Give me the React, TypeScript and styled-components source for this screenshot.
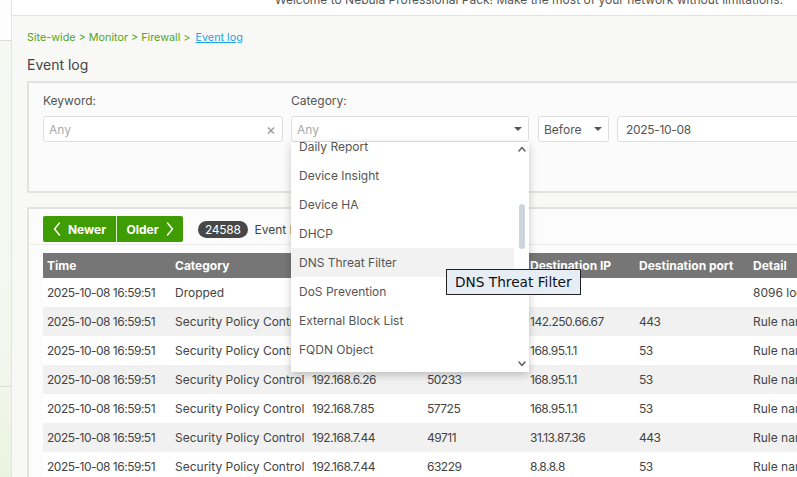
import React from "react";
import styled, { createGlobalStyle } from "styled-components";

const GlobalStyle = createGlobalStyle`
  html, body { margin: 0; padding: 0; }
  body {
    font-family: "Inter", "Noto Sans", sans-serif;
    background: #f8f9f7;
    overflow: hidden;
  }
  * { box-sizing: border-box; }
`;

const Page = styled.div`
  display: flex;
  width: 797px;
  height: 477px;
  overflow: hidden;
`;

const Sidebar = styled.aside`
  width: 12px;
  flex: none;
  display: flex;
  flex-direction: column;
  border-right: 1px solid #e3e5e1;
`;

const SideTop = styled.div`
  height: 41px;
  background: #fdfdfd;
  border-bottom: 1px solid #dcdcdc;
`;

const SideBody = styled.div`
  flex: 1;
  display: flex;
  flex-direction: column;
  background: linear-gradient(180deg, #f6f8f3 0%, #f3f7ee 70%, #eaf3e0 100%);
`;

const SideSpacer = styled.div`
  height: 345px;
`;

const SideLine = styled.div`
  height: 1px;
  background: #d9dcd5;
`;

const Main = styled.main`
  flex: 1;
  min-width: 0;
  display: flex;
  flex-direction: column;
  overflow: hidden;
`;

const TopBar = styled.header`
  height: 16px;
  flex: none;
  display: flex;
  justify-content: flex-end;
  align-items: flex-start;
  padding-right: 14px;
  background: #ffffff;
  border-bottom: 1px solid #e2e2e2;
  overflow: hidden;
`;

const Welcome = styled.span`
  margin-top: -8px;
  font-size: 12px;
  line-height: 16px;
  color: #555;
  white-space: nowrap;
`;

const Content = styled.div`
  padding: 15px 0 0 15px;
  display: flex;
  flex-direction: column;
`;

const Breadcrumb = styled.nav`
  font-size: 10.8px;
  line-height: 14px;
  color: #55a418;
  white-space: nowrap;
`;

const CrumbLink = styled.a`
  margin-left: 5px;
  color: #17a6e6;
  text-decoration: underline;
`;

const Title = styled.h1`
  margin: 11px 0 0;
  font-size: 14px;
  line-height: 18px;
  font-weight: 400;
  color: #444;
`;

const Card = styled.section<{ $mt: number }>`
  margin-top: ${(p) => p.$mt}px;
  width: 820px;
  border: 2px solid #e2e2e2;
  background: #fbfbfb;
`;

const FilterCard = styled(Card)`
  height: 112px;
  padding: 10px 14px 0;
`;

const FilterRow = styled.div`
  display: flex;
  align-items: flex-end;
`;

const Field = styled.div<{ $w: number; $ml: number }>`
  position: relative;
  width: ${(p) => p.$w}px;
  margin-left: ${(p) => p.$ml}px;
  display: flex;
  flex-direction: column;
  gap: 7px;
  flex: none;
`;

const Label = styled.label`
  font-size: 12px;
  line-height: 16px;
  color: #555;
`;

const Box = styled.div<{ $muted?: boolean }>`
  height: 26px;
  display: flex;
  align-items: center;
  justify-content: space-between;
  padding: 0 6px 0 5px;
  background: #fff;
  border: 1px solid #dedede;
  border-radius: 3px;
  font-size: 12px;
  color: ${(p) => (p.$muted ? "#aaa" : "#555")};
`;

const DateBox = styled(Box)`
  padding-left: 8px;
  letter-spacing: -0.3px;
`;

const Caret = styled.span`
  width: 0;
  height: 0;
  border-left: 4px solid transparent;
  border-right: 4px solid transparent;
  border-top: 4px solid #555;
`;

const Clear = styled.span`
  font-size: 15px;
  color: #999;
  line-height: 1;
`;

const Dropdown = styled.div`
  position: absolute;
  top: 100%;
  left: 0;
  width: 238px;
  height: 230px;
  display: flex;
  background: #fff;
  box-shadow: 0 3px 8px rgba(0, 0, 0, 0.22);
  overflow: hidden;
  z-index: 5;
`;

const OptionList = styled.ul`
  list-style: none;
  margin: -10px 0 0;
  padding: 0;
  flex: 1;
`;

const Option = styled.li<{ $active?: boolean }>`
  height: 29px;
  display: flex;
  align-items: center;
  padding-left: 8px;
  font-size: 12px;
  color: #555;
  white-space: nowrap;
  background: ${(p) => (p.$active ? "#f2f2f2" : "#fff")};
`;

const ScrollTrack = styled.div`
  width: 15px;
  flex: none;
  display: flex;
  flex-direction: column;
  align-items: center;
  padding: 4px 0 5px;
`;

const Thumb = styled.div`
  width: 6px;
  height: 45px;
  margin-top: 52px;
  border-radius: 3px;
  background: #ccd5dd;
`;

const ScrollSpacer = styled.div`
  flex: 1;
`;

const Tooltip = styled.div`
  position: absolute;
  left: 155px;
  top: 176px;
  height: 26px;
  padding: 0 8px;
  display: flex;
  align-items: center;
  background: #e6edf5;
  border: 1px solid #222;
  font-family: "DejaVu Sans", sans-serif;
  font-size: 13.7px;
  color: #111;
  white-space: nowrap;
  z-index: 6;
`;

const LogCard = styled(Card)`
  height: 300px;
  background: #fcfcfc;
`;

const Toolbar = styled.div`
  display: flex;
  align-items: center;
  padding: 7px 14px 2px;
  border-bottom: 1px solid #ececec;
`;

const ButtonGroup = styled.div`
  display: flex;
  gap: 1px;
  background: #d9efc9;
  border-radius: 2px;
  overflow: hidden;
`;

const NavButton = styled.button<{ $w: number }>`
  width: ${(p) => p.$w}px;
  height: 26px;
  border: none;
  padding: 0;
  display: flex;
  align-items: center;
  justify-content: center;
  gap: 7px;
  background: #3f9c03;
  color: #fff;
  font-family: inherit;
  font-size: 12px;
  font-weight: 700;
`;

const Count = styled.span`
  margin-left: 15px;
  height: 17px;
  padding: 0 7px;
  display: flex;
  align-items: center;
  border-radius: 9px;
  background: #474747;
  color: #fff;
  font-size: 12px;
  letter-spacing: -0.3px;
`;

const CountText = styled.span`
  margin-left: 7px;
  font-size: 12px;
  color: #444;
  white-space: nowrap;
`;

const TableWrap = styled.div`
  padding: 8px 0 0 14px;
`;

const Table = styled.table`
  border-collapse: collapse;
  table-layout: fixed;
  width: 860px;
  font-size: 12px;
`;

const Th = styled.th<{ $w: number }>`
  width: ${(p) => p.$w}px;
  height: 25px;
  padding: 0 4px;
  text-align: left;
  background: #767676;
  color: #fff;
  font-weight: 700;
  white-space: nowrap;
  overflow: hidden;
`;

const Tr = styled.tr<{ $alt: boolean }>`
  background: ${(p) => (p.$alt ? "#f1f1f1" : "#fff")};
`;

const Td = styled.td<{ $num: boolean }>`
  height: 29px;
  padding: 0 4px;
  color: #444;
  white-space: nowrap;
  overflow: hidden;
  letter-spacing: ${(p) => (p.$num ? "-0.5px" : "0")};
`;

const Chevron = ({ dir }: { dir: "left" | "right" }) => (
  <svg width="8" height="14" viewBox="0 0 8 14" fill="none">
    <polyline
      points={dir === "left" ? "6.5,1 1.5,7 6.5,13" : "1.5,1 6.5,7 1.5,13"}
      stroke="#fff"
      strokeWidth="1.4"
      strokeLinecap="round"
      strokeLinejoin="round"
    />
  </svg>
);

const SmallArrow = ({ up }: { up?: boolean }) => (
  <svg width="8" height="6" viewBox="0 0 8 6" fill="none">
    <polyline
      points={up ? "1,5 4,1.5 7,5" : "1,1 4,4.5 7,1"}
      stroke="#666"
      strokeWidth="1.6"
      strokeLinecap="round"
      strokeLinejoin="round"
    />
  </svg>
);

const columns: [string, number][] = [
  ["Time", 128],
  ["Category", 137],
  ["Source IP", 115],
  ["Source port", 103],
  ["Destination IP", 109],
  ["Destination port", 114],
  ["Detail", 154],
];

const numericCols = new Set([0, 2, 3, 4, 5]);

const T = "2025-10-08 16:59:51";
const SPC = "Security Policy Control";
const rows: string[][] = [
  [T, "Dropped", "", "", "", "", "8096 logs dropped"],
  [T, SPC, "192.168.7.44", "52144", "142.250.66.67", "443", "Rule name: Default"],
  [T, SPC, "192.168.7.85", "61377", "168.95.1.1", "53", "Rule name: Default"],
  [T, SPC, "192.168.6.26", "50233", "168.95.1.1", "53", "Rule name: Default"],
  [T, SPC, "192.168.7.85", "57725", "168.95.1.1", "53", "Rule name: Default"],
  [T, SPC, "192.168.7.44", "49711", "31.13.87.36", "443", "Rule name: Default"],
  [T, SPC, "192.168.7.44", "63229", "8.8.8.8", "53", "Rule name: Default"],
];

const options = [
  "Daily Report",
  "Device Insight",
  "Device HA",
  "DHCP",
  "DNS Threat Filter",
  "DoS Prevention",
  "External Block List",
  "FQDN Object",
  "Gateway Anti-Malware",
];

export default function App() {
  return (
    <>
      <GlobalStyle />
      <Page>
        <Sidebar>
          <SideTop />
          <SideBody>
            <SideSpacer />
            <SideLine />
          </SideBody>
        </Sidebar>
        <Main>
          <TopBar>
            <Welcome>
              Welcome to Nebula Professional Pack! Make the most of your network without limitations.
            </Welcome>
          </TopBar>
          <Content>
            <Breadcrumb>
              Site-wide &gt; Monitor &gt; Firewall &gt;
              <CrumbLink>Event log</CrumbLink>
            </Breadcrumb>
            <Title>Event log</Title>
            <FilterCard $mt={7}>
              <FilterRow>
                <Field $w={240} $ml={0}>
                  <Label>Keyword:</Label>
                  <Box $muted>
                    Any
                    <Clear>×</Clear>
                  </Box>
                </Field>
                <Field $w={238} $ml={8}>
                  <Label>Category:</Label>
                  <Box $muted>
                    Any
                    <Caret />
                  </Box>
                  <Dropdown>
                    <OptionList>
                      {options.map((o) => (
                        <Option key={o} $active={o === "DNS Threat Filter"}>
                          {o}
                        </Option>
                      ))}
                    </OptionList>
                    <ScrollTrack>
                      <SmallArrow up />
                      <Thumb />
                      <ScrollSpacer />
                      <SmallArrow />
                    </ScrollTrack>
                  </Dropdown>
                  <Tooltip>DNS Threat Filter</Tooltip>
                </Field>
                <Field $w={71} $ml={9}>
                  <Box>
                    Before
                    <Caret />
                  </Box>
                </Field>
                <Field $w={210} $ml={8}>
                  <DateBox>2025-10-08</DateBox>
                </Field>
              </FilterRow>
            </FilterCard>
            <LogCard $mt={14}>
              <Toolbar>
                <ButtonGroup>
                  <NavButton $w={73}>
                    <Chevron dir="left" />
                    Newer
                  </NavButton>
                  <NavButton $w={66}>
                    Older
                    <Chevron dir="right" />
                  </NavButton>
                </ButtonGroup>
                <Count>24588</Count>
                <CountText>Event logs found</CountText>
              </Toolbar>
              <TableWrap>
                <Table>
                  <thead>
                    <tr>
                      {columns.map(([c, w]) => (
                        <Th key={c} $w={w}>
                          {c}
                        </Th>
                      ))}
                    </tr>
                  </thead>
                  <tbody>
                    {rows.map((r, i) => (
                      <Tr key={i} $alt={i % 2 === 1}>
                        {r.map((c, j) => (
                          <Td key={j} $num={numericCols.has(j)}>
                            {c}
                          </Td>
                        ))}
                      </Tr>
                    ))}
                  </tbody>
                </Table>
              </TableWrap>
            </LogCard>
          </Content>
        </Main>
      </Page>
    </>
  );
}
